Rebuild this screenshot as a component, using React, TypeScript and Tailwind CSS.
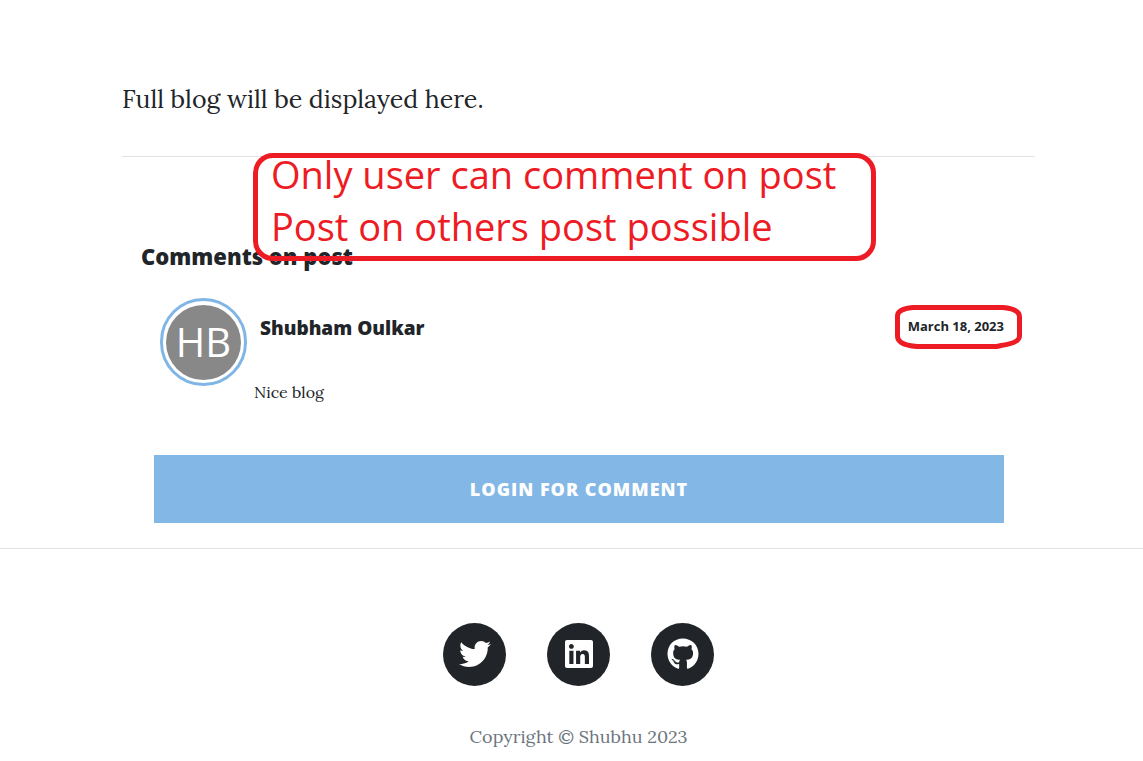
import { FaGithub, FaLinkedin, FaTwitter } from "react-icons/fa";

const socialLinks = [
  { label: "Twitter", Icon: FaTwitter },
  { label: "LinkedIn", Icon: FaLinkedin },
  { label: "GitHub", Icon: FaGithub },
];

function PostNote() {
  return (
    <div className="absolute -top-1 left-[131px] h-[108px] w-[623px] rounded-[20px] border-5 border-[#ed1c24] px-[13px] font-['Open_Sans',sans-serif] text-[38px] leading-[52px] whitespace-nowrap text-[#ed1c24]">
      <p className="-mt-[10px]">Only user can comment on post</p>
      <p>Post on others post possible</p>
    </div>
  );
}

function Comment() {
  return (
    <article className="flex items-start pr-[31px] pl-[38px]">
      <div className="flex h-[88px] w-[87px] shrink-0 items-center justify-center rounded-full border-3 border-[#80b6e5]">
        <div className="flex size-[75px] items-center justify-center rounded-full bg-[#888888] font-['Open_Sans',sans-serif] text-[40px] leading-none text-white">
          HB
        </div>
      </div>
      <div className="ml-[7px] grow pt-4">
        <header className="flex items-start justify-between">
          <h3 className="ml-[6px] font-['Open_Sans',sans-serif] text-[19px] leading-7 font-extrabold">
            Shubham Oulkar
          </h3>
          <div className="relative">
            <time
              dateTime="2023-03-18"
              className="block font-['Open_Sans',sans-serif] text-[13px] leading-6 font-bold"
            >
              March 18, 2023
            </time>
            <svg
              aria-hidden="true"
              viewBox="0 0 127 44"
              className="absolute -top-[9px] -right-[18px] h-11 w-[127px] fill-none stroke-[#ed1c24] stroke-5"
            >
              <path d="M18 2.500H108Q124.500 4 124.500 12V31Q124.500 38 106 40.500L102 41.500H22Q2.500 40 2.500 31V11Q2.500 4 18 2.500Z" />
            </svg>
          </div>
        </header>
        <p className="mt-[38px] text-[16px] leading-6">Nice blog</p>
      </div>
    </article>
  );
}

export default function App() {
  return (
    <div className="bg-white pl-[14px] font-['Lora','Liberation_Serif',serif] text-[#212529]">
      <main className="mx-auto max-w-[913px] pt-[79px]">
        <p className="text-[25px] leading-10">Full blog will be displayed here.</p>
        <section className="relative mt-[37px] border-t border-[#e2e3e4] pt-[83px]">
          <h2 className="pl-[19px] font-['Open_Sans',sans-serif] text-[22px] leading-8 font-extrabold">
            Comments on post
          </h2>
          <PostNote />
          <div className="mt-[26px]">
            <Comment />
          </div>
          <div className="mt-[51px] pr-[31px] pl-8">
            <button
              type="button"
              className="h-[68px] w-full bg-[#82b7e6] font-['Open_Sans',sans-serif] text-[18px] font-extrabold tracking-[1px] text-white uppercase"
            >
              Login for comment
            </button>
          </div>
        </section>
      </main>
      <footer className="mt-[25px] -ml-[14px] border-t border-[#e2e3e4] pt-[74px] pb-2 pl-[14px]">
        <ul className="flex justify-center gap-[41px]">
          {socialLinks.map(({ label, Icon }) => (
            <li key={label}>
              <a
                href="#"
                aria-label={label}
                className="flex size-[63px] items-center justify-center rounded-full bg-[#212529] pb-px text-white"
              >
                <Icon className="size-8" aria-hidden="true" />
              </a>
            </li>
          ))}
        </ul>
        <p className="mt-[37px] text-center text-[18px] leading-7 text-[#6c757d]">
          Copyright © Shubhu 2023
        </p>
      </footer>
    </div>
  );
}
